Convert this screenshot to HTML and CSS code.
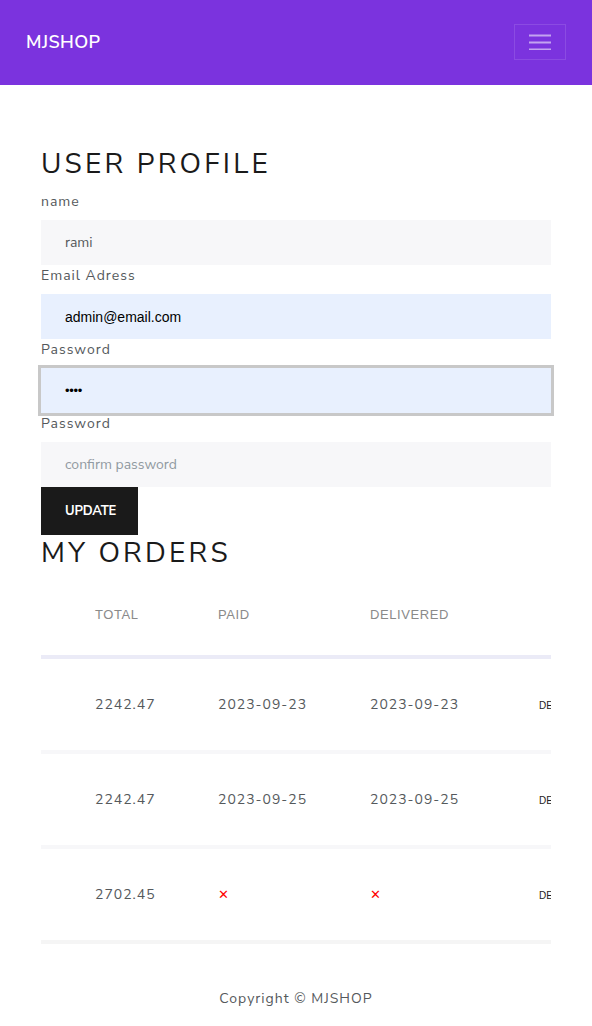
FILE: index.html
```html
<!DOCTYPE html>
<html lang="en">
<head>
<meta charset="utf-8">
<title>MJSHOP - Profile</title>
<link rel="stylesheet" href="styles.css">
</head>
<body>
<header class="navbar">
  <a class="brand" href="#">MJSHOP</a>
  <button class="toggler" type="button" aria-label="Toggle navigation">
    <svg width="22" height="16" viewBox="0 0 22 16"><path d="M0 1.5h22M0 8.5h22M0 15.5h22" stroke="rgba(255,255,255,0.55)" stroke-width="2"/></svg>
  </button>
</header>
<main class="container">
  <h2 class="title">User Profile</h2>
  <form class="form">
    <label class="label">name</label>
    <div class="input">rami</div>
    <label class="label">Email Adress</label>
    <div class="input autofill">admin@email.com</div>
    <label class="label">Password</label>
    <div class="input autofill focus">••••</div>
    <label class="label">Password</label>
    <div class="input placeholder">confirm password</div>
    <button class="btn" type="button">Update</button>
  </form>
  <h2 class="title orders-title">My Orders</h2>
  <div class="table-wrap">
    <table class="table">
      <colgroup>
        <col class="c0"><col class="c1"><col class="c2"><col class="c3"><col class="c4">
      </colgroup>
      <thead>
        <tr><th></th><th>Total</th><th>Paid</th><th>Delivered</th><th></th></tr>
      </thead>
      <tbody>
        <tr><td></td><td>2242.47</td><td>2023-09-23</td><td>2023-09-23</td><td><span class="details">Details</span></td></tr>
        <tr><td></td><td>2242.47</td><td>2023-09-25</td><td>2023-09-25</td><td><span class="details">Details</span></td></tr>
        <tr class="last"><td></td><td>2702.45</td><td><span class="cross">✕</span></td><td><span class="cross">✕</span></td><td><span class="details">Details</span></td></tr>
      </tbody>
    </table>
  </div>
</main>
<footer class="footer">Copyright © MJSHOP</footer>
</body>
</html>
```

FILE: styles.css
```css
* { box-sizing: border-box; }
html, body { margin: 0; padding: 0; }
body {
  font-family: "Nunito Sans", Lato, "Open Sans", sans-serif;
  font-size: 14px;
  color: #55595c;
  background: #fff;
  width: 592px;
}
.navbar {
  height: 85px;
  background: #7b33de;
  display: flex;
  align-items: center;
  justify-content: space-between;
  padding: 0 26px;
}
.brand {
  color: #fff;
  text-decoration: none;
  font-size: 18px;
  font-weight: 600;
  letter-spacing: 0.4px;
  margin-top: -1px;
}
.toggler {
  width: 52px;
  height: 36px;
  border: 1px solid rgba(255,255,255,0.12);
  background: transparent;
  display: flex;
  align-items: center;
  justify-content: center;
  padding: 0;
  margin-top: -1px;
}
.container {
  padding: 62px 41px 0;
}
.title {
  margin: 0;
  font-size: 28px;
  line-height: 34px;
  font-weight: 400;
  letter-spacing: 3.2px;
  text-transform: uppercase;
  color: #1a1a1a;
}
.form {
  display: flex;
  flex-direction: column;
  align-items: flex-start;
  margin-top: 10px;
}
.label {
  font-size: 14px;
  line-height: 21px;
  letter-spacing: 1px;
  color: #55595c;
  margin-bottom: 8px;
}
.input {
  width: 100%;
  height: 45px;
  background: #f7f7f9;
  padding: 0 24px;
  display: flex;
  align-items: center;
  font-size: 14px;
  color: #55595c;
}
.input.autofill {
  background: #e8f0fe;
  color: #000;
  font-family: "Liberation Sans", Arial, sans-serif;
}
.input.focus {
  box-shadow: 0 0 0 3px #c8c8c8;
  font-size: 13px;
  letter-spacing: -0.3px;
}
.input.placeholder { color: #919aa1; }
.btn {
  width: 97px;
  height: 48px;
  padding: 0 24px;
  border: 0;
  background: #1a1a1a;
  color: #fff;
  font-family: inherit;
  font-size: 13px;
  font-weight: 700;
  letter-spacing: -0.2px;
  text-align: left;
  text-transform: uppercase;
}
.orders-title { margin-top: 1px; }
.table-wrap {
  width: 510px;
  overflow: hidden;
  margin-top: 3px;
}
.table {
  border-collapse: collapse;
  table-layout: fixed;
  width: 560px;
}
.c0 { width: 30px; }
.c1 { width: 123px; }
.c2 { width: 152px; }
.c3 { width: 169px; }
.c4 { width: 86px; }
.table th {
  height: 84px;
  padding: 0 24px;
  text-align: left;
  font-family: "Liberation Sans", Arial, sans-serif;
  font-weight: 400;
  font-size: 13px;
  letter-spacing: 0.6px;
  text-transform: uppercase;
  color: #8a8a8a;
  border-bottom: 4px solid #ebebf7;
}
.table td {
  height: 95px;
  padding: 0 24px;
  font-size: 14px;
  letter-spacing: 1px;
  color: #55595c;
  border-bottom: 4px solid #f7f7f9;
  white-space: nowrap;
}
.table tr.last td { border-bottom-color: #f5f5f5; }
.cross {
  color: #f00;
  font-family: "DejaVu Sans", sans-serif;
  font-size: 13px;
  font-weight: 700;
}
.details {
  font-family: "Liberation Sans", Arial, sans-serif;
  font-size: 10px;
  font-weight: 400;
  color: #222;
  letter-spacing: 0;
  text-transform: uppercase;
}
.footer {
  text-align: center;
  font-size: 14px;
  letter-spacing: 1px;
  color: #55595c;
  margin-top: 45px;
}
```
